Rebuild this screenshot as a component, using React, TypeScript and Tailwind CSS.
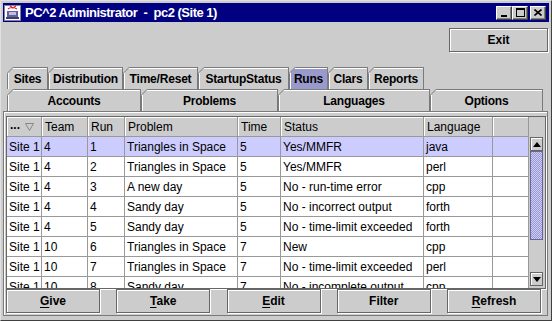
import React from 'react';

const COLS = [35, 46, 37, 113, 43, 143, 69, 36];
const HEADERS = ['', 'Team', 'Run', 'Problem', 'Time', 'Status', 'Language', ''];

const RUNS: string[][] = [
  ['Site 1', '4', '1', 'Triangles in Space', '5', 'Yes/MMFR', 'java', ''],
  ['Site 1', '4', '2', 'Triangles in Space', '5', 'Yes/MMFR', 'perl', ''],
  ['Site 1', '4', '3', 'A new day', '5', 'No - run-time error', 'cpp', ''],
  ['Site 1', '4', '4', 'Sandy day', '5', 'No - incorrect output', 'forth', ''],
  ['Site 1', '4', '5', 'Sandy day', '5', 'No - time-limit exceeded', 'forth', ''],
  ['Site 1', '10', '6', 'Triangles in Space', '7', 'New', 'cpp', ''],
  ['Site 1', '10', '7', 'Triangles in Space', '7', 'No - time-limit exceeded', 'perl', ''],
  ['Site 1', '10', '8', 'Sandy day', '7', 'No - incomplete output', 'cpp', ''],
];

const TOP_TABS = [
  { label: 'Sites', w: 41 },
  { label: 'Distribution', w: 75 },
  { label: 'Time/Reset', w: 75 },
  { label: 'StartupStatus', w: 91 },
  { label: 'Runs', w: 39, selected: true },
  { label: 'Clars', w: 40 },
  { label: 'Reports', w: 56 },
];

const FRONT_TABS = [
  { label: 'Accounts', w: 134 },
  { label: 'Problems', w: 137 },
  { label: 'Languages', w: 152 },
  { label: 'Options', w: 113 },
];

const BUTTONS = [
  { key: 'G', rest: 'ive' },
  { key: 'T', rest: 'ake' },
  { key: 'E', rest: 'dit' },
  { key: '', rest: 'Filter' },
  { key: 'R', rest: 'efresh' },
];

function Tab({ label, w, selected }: { label: string; w: number; selected?: boolean }) {
  return (
    <div
      className={`relative h-[22px] flex items-center justify-center text-[12px] font-bold tracking-[-0.2px] border-t border-l border-r border-[#7a7a7a] shadow-[inset_1px_1px_0_#ffffff] ${selected ? 'bg-[#9999cc]' : 'bg-[#cccccc]'}`}
      style={{ width: w }}
    >
      <svg className="absolute -top-px -left-px" width="7" height="7" viewBox="0 0 7 7">
        <polygon points="0,0 7,0 0,7" fill="#cccccc" />
        <line x1="0" y1="6.5" x2="6.5" y2="0" stroke="#7a7a7a" strokeWidth="1" />
      </svg>
      {label}
    </div>
  );
}

function TitleButton({ children }: { children: React.ReactNode }) {
  return (
    <div className="w-[16px] h-[14px] bg-[#cccccc] border border-t-white border-l-white border-r-[#404040] border-b-[#404040] shadow-[inset_-1px_-1px_0_#808080] flex items-center justify-center">
      {children}
    </div>
  );
}

function ScrollButton({ up }: { up?: boolean }) {
  return (
    <div className="h-[14px] bg-[#cccccc] border border-[#666666] shadow-[inset_1px_1px_0_#ffffff] flex items-center justify-center">
      <svg width="8" height="5" viewBox="0 0 8 5">
        {up ? <polygon points="0,5 8,5 4,0" fill="#000" /> : <polygon points="0,0 8,0 4,5" fill="#000" />}
      </svg>
    </div>
  );
}

export default function App() {
  return (
    <div className="w-[552px] h-[321px] overflow-hidden bg-[#cccccc] border border-t-[#e0e0e0] border-l-[#e0e0e0] border-r-[#404040] border-b-[#404040] p-[2px] font-['Liberation_Sans',Arial,sans-serif] text-black">
      {/* title bar */}
      <div className="h-[19px] bg-[#000080] flex items-center pl-[1px] pr-[3px]">
        <svg width="17" height="16" viewBox="0 0 17 16">
          <rect x="0.5" y="0.5" width="16" height="15" fill="#ffffff" stroke="#8080a0" />
          <path d="M6 1 L9 3 L12 1 M4 4 C6 2 10 2 13 4" stroke="#e02020" strokeWidth="1.2" fill="none" />
          <rect x="3" y="6" width="11" height="6" fill="#6060a0" />
          <rect x="5" y="7" width="7" height="3" fill="#c0c0e0" />
          <rect x="2" y="12" width="13" height="2" fill="#404060" />
        </svg>
        <span className="ml-[4px] text-white font-bold text-[13px] tracking-[-0.5px] whitespace-pre">PC^2 Administrator  -  pc2 (Site 1)</span>
        <div className="ml-auto flex items-center">
          <TitleButton>
            <svg width="8" height="8" viewBox="0 0 8 8"><rect x="1" y="6" width="6" height="2" fill="#000" /></svg>
          </TitleButton>
          <TitleButton>
            <svg width="9" height="9" viewBox="0 0 9 9"><rect x="0.5" y="0.5" width="8" height="8" fill="none" stroke="#000" /><rect x="0" y="0" width="9" height="2" fill="#000" /></svg>
          </TitleButton>
          <div className="ml-[2px]">
            <TitleButton>
              <svg width="8" height="7" viewBox="0 0 8 7"><path d="M0.5 0.5 L7.5 6.5 M7.5 0.5 L0.5 6.5" stroke="#000" strokeWidth="1.6" /></svg>
            </TitleButton>
          </div>
        </div>
      </div>

      {/* exit */}
      <div className="flex justify-end pr-[1px] mt-[6px]">
        <button className="w-[99px] h-[24px] bg-[#cccccc] border border-[#666666] shadow-[inset_1px_1px_0_#ffffff,1px_1px_0_#ffffff] text-[12px] font-bold">
          Exit
        </button>
      </div>

      {/* tabs */}
      <div className="mt-[15px] pl-[4px] flex">
        {TOP_TABS.map((t) => (
          <Tab key={t.label} label={t.label} w={t.w} selected={t.selected} />
        ))}
      </div>
      <div className="pl-[4px] flex">
        {FRONT_TABS.map((t) => (
          <Tab key={t.label} label={t.label} w={t.w} />
        ))}
      </div>

      {/* panel */}
      <div className="w-[545px] border border-[#7a7a7a] shadow-[inset_1px_1px_0_#ffffff] pt-[4px] pb-[2px]">
        <div className="ml-[2px] w-[540px] border border-[#666666] shadow-[1px_1px_0_#ffffff] flex flex-col">
          {/* header */}
          <div className="flex h-[20px]">
            {HEADERS.map((h, i) => (
              <div
                key={i}
                className="h-[20px] border-r border-b border-[#999999] shadow-[inset_1px_1px_0_#ffffff] bg-[#cccccc] text-[12px] pl-[3px] flex items-center"
                style={{ width: COLS[i] }}
              >
                {i === 0 ? (
                  <span className="flex items-center gap-[5px]">
                    <span className="font-bold leading-none -mt-[4px]">...</span>
                    <svg width="9" height="8" viewBox="0 0 9 8"><polygon points="0.5,0.5 8.5,0.5 4.5,7.5" fill="none" stroke="#888" /></svg>
                  </span>
                ) : (
                  h
                )}
              </div>
            ))}
            <div className="w-[16px] bg-[#cccccc]" />
          </div>
          {/* body */}
          <div className="flex h-[151px] overflow-hidden">
            <div className="w-[522px] bg-white">
              {RUNS.map((r, ri) => (
                <div key={ri} className={`flex h-[20px] ${ri === 0 ? 'bg-[#ccccff]' : 'bg-white'}`}>
                  {r.map((c, ci) => (
                    <div
                      key={ci}
                      className="h-[20px] border-r border-b border-[#999999] text-[12px] pl-[2px] flex items-center whitespace-nowrap overflow-hidden"
                      style={{ width: COLS[ci] }}
                    >
                      {c}
                    </div>
                  ))}
                </div>
              ))}
            </div>
            <div className="w-[16px] bg-[#cccccc] flex flex-col pl-[1px] pr-[2px] pb-[2px]">
              <ScrollButton up />
              <div className="h-[89px] border border-[#666699] bg-[repeating-conic-gradient(#ccccff_0_25%,#9999cc_0_50%)] bg-[length:2px_2px]" />
              <div className="flex-1" />
              <ScrollButton />
            </div>
          </div>
        </div>

        {/* buttons */}
        <div className="ml-[2px] w-[535px] flex justify-between">
          {BUTTONS.map((b) => (
            <button
              key={b.rest}
              className="w-[94px] h-[24px] bg-[#cccccc] border border-[#666666] shadow-[inset_1px_1px_0_#ffffff,1px_1px_0_#ffffff] text-[12px] font-bold"
            >
              {b.key && <span className="underline underline-offset-2">{b.key}</span>}
              {b.rest}
            </button>
          ))}
        </div>
      </div>
    </div>
  );
}
